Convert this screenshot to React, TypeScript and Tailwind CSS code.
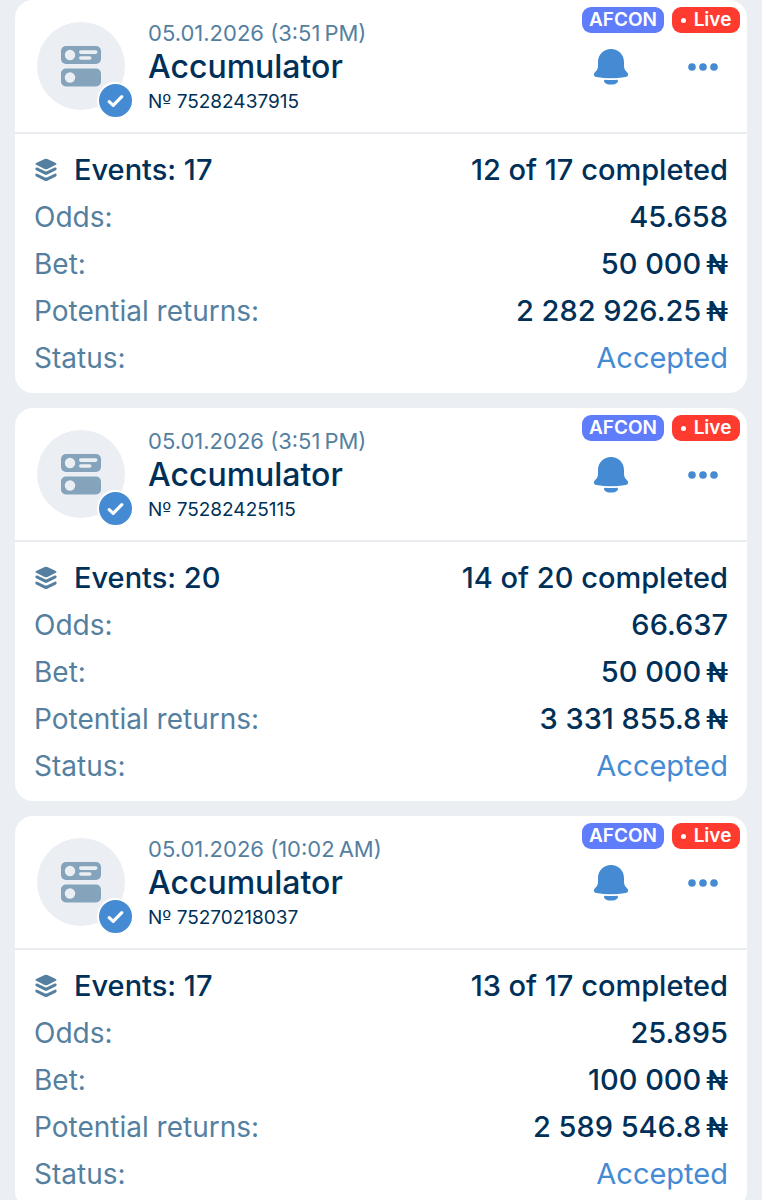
import React, { useState } from "react";

interface BetProps {
  id: string;
  date: string;
  total: number;
  completed: number;
  odds: string;
  bet: string;
  returns: string;
}

const AccumulatorIcon = () => (
  <svg width="40" height="41" viewBox="0 0 40 41" aria-hidden="true">
    <rect width="40" height="18" rx="5" fill="#85a3bb" />
    <rect y="22.5" width="40" height="18" rx="5" fill="#85a3bb" />
    <circle cx="9" cy="9" r="5.2" fill="#ebeef3" />
    <circle cx="9" cy="31.5" r="5.2" fill="#ebeef3" />
    <rect x="18" y="4.3" width="18.5" height="3.6" rx="1.8" fill="#ebeef3" />
    <rect x="18" y="10.2" width="12.5" height="3.6" rx="1.8" fill="#ebeef3" />
  </svg>
);

const CheckIcon = () => (
  <svg width="33" height="33" viewBox="0 0 33 33" fill="none" aria-hidden="true">
    <path d="M10.2 17.6 14.2 21.4 22.8 12.6" stroke="#fff" strokeWidth="3.2" strokeLinecap="round" strokeLinejoin="round" />
  </svg>
);

const LayersIcon = () => (
  <svg width="22" height="24" viewBox="0 0 22 24" fill="#557f9f" aria-hidden="true">
    <path d="M9.6 1Q11 .4 12.4 1L20.8 5Q22.2 5.9 20.8 6.8L12.4 11Q11 11.6 9.6 11L1.2 6.8Q-.2 5.9 1.2 5Z" />
    <path d="M.4 10Q1 9 2.3 9.6L9.6 13.1Q11 13.7 12.4 13.1L19.7 9.6Q21 9 21.6 10 22 11.6 20.8 12.3L12.4 16.6Q11 17.2 9.6 16.6L1.2 12.3Q0 11.6.4 10Z" />
    <path d="M.4 16.2Q1 15.2 2.3 15.8L9.6 19.3Q11 19.9 12.4 19.3L19.7 15.8Q21 15.2 21.6 16.2 22 17.8 20.8 18.5L12.4 22.8Q11 23.4 9.6 22.8L1.2 18.5Q0 17.8.4 16.2Z" />
  </svg>
);

const BellIcon = () => (
  <svg width="36" height="38" viewBox="0 0 36 38" fill="#448bd3" aria-hidden="true">
    <path d="M18 1C25.5 1 31 6.6 31 14V17.5C31 20.5 31.8 22 33.6 23.8 34.9 25.1 35.4 26.2 34.9 27.4 34.6 28.3 33.6 28.7 32.5 28.9 23 30.6 13 30.6 3.5 28.9 2.4 28.7 1.4 28.3 1.1 27.4.6 26.2 1.1 25.1 2.4 23.8 4.2 22 5 20.5 5 17.5V14C5 6.6 10.5 1 18 1Z" />
    <path d="M12 31.8Q18 32.4 24 31.8 25.4 31.9 25 33.2C24.2 35.6 22 36.6 18 36.6S11.8 35.6 11 33.2Q10.6 31.9 12 31.8Z" />
  </svg>
);

const DotsIcon = () => (
  <svg width="30" height="8" viewBox="0 0 30 8" fill="#448bd3" aria-hidden="true">
    <circle cx="4" cy="4" r="3.8" />
    <circle cx="15" cy="4" r="3.8" />
    <circle cx="26" cy="4" r="3.8" />
  </svg>
);

const Row = ({ label, children }: { label: React.ReactNode; children: React.ReactNode }) => (
  <div className="flex h-[47px] items-center justify-between">
    <dt className="text-[28px] text-[#557f9f]">{label}</dt>
    <dd className="text-[29px] font-medium text-[#003058]">{children}</dd>
  </div>
);

const Money = ({ amount }: { amount: string }) => (
  <span className="flex items-baseline gap-x-[5px]">
    {amount}
    <span className="font-['Roboto',sans-serif] text-[27px] leading-none font-medium">₦</span>
  </span>
);

const BetCard = ({ item }: { item: BetProps }) => (
  <article className="relative rounded-[18px] bg-white">
    {/* Tags */}
    <div className="absolute top-[7px] right-[7px] flex gap-2 text-[19px] leading-[26px] font-semibold text-white">
      <span className="w-[82px] rounded-[9px] bg-[#5f7cfb] text-center">AFCON</span>
      <span className="flex w-[68px] items-center justify-center gap-2 rounded-[9px] bg-[#ff3b30]">
        <span className="size-[5px] rounded-full bg-white"></span>
        Live
      </span>
    </div>
    <header className="flex justify-between border-b-2 border-[#e8ecf1] pt-5 pr-[29px] pb-4 pl-[22px]">
      <div className="flex gap-x-[23px]">
        <div className="relative mt-0.5 flex size-[88px] items-center justify-center rounded-full bg-[#ebeef3]">
          <AccumulatorIcon />
          <span className="absolute -right-[9px] -bottom-[9px] rounded-full border-2 border-white bg-[#448bd3]">
            <CheckIcon />
          </span>
        </div>
        <div>
          <p className="text-[22px] leading-[26px] text-[#557f9f]">{item.date}</p>
          <h2 className="text-[32px] leading-[42px] font-medium text-[#003058]">Accumulator</h2>
          <p className="text-[19px] leading-7 text-[#003058]">
            N<span className="font-['DejaVu_Sans',sans-serif] leading-none">º</span> {item.id}
          </p>
        </div>
      </div>
      <div className="mt-[27px] flex h-10 items-center gap-x-[59px]">
        <button type="button" aria-label="Notifications" className="cursor-pointer">
          <BellIcon />
        </button>
        <button type="button" aria-label="More" className="cursor-pointer py-3">
          <DotsIcon />
        </button>
      </div>
    </header>
    <dl className="px-[19px] py-3 leading-9">
      <Row
        label={
          <span className="flex items-center gap-x-[17px] pl-px text-[29px] font-medium text-[#003058]">
            <LayersIcon />
            Events: {item.total}
          </span>
        }
      >
        {item.completed} of {item.total} completed
      </Row>
      <Row label="Odds:">{item.odds}</Row>
      <Row label="Bet:">
        <Money amount={item.bet} />
      </Row>
      <Row label="Potential returns:">
        <Money amount={item.returns} />
      </Row>
      <Row label="Status:">
        <span className="font-normal text-[#448bd3]">Accepted</span>
      </Row>
    </dl>
  </article>
);

const App = () => {
  const [bets] = useState<BetProps[]>([
    {
      id: "75282437915",
      date: "05.01.2026 (3:51\u2009PM)",
      total: 17,
      completed: 12,
      odds: "45.658",
      bet: "50 000",
      returns: "2 282 926.25",
    },
    {
      id: "75282425115",
      date: "05.01.2026 (3:51\u2009PM)",
      total: 20,
      completed: 14,
      odds: "66.637",
      bet: "50 000",
      returns: "3 331 855.8",
    },
    {
      id: "75270218037",
      date: "05.01.2026 (10:02\u2009AM)",
      total: 17,
      completed: 13,
      odds: "25.895",
      bet: "100 000",
      returns: "2 589 546.8",
    },
  ]);

  return (
    <main className="flex min-h-screen flex-col gap-y-[15px] bg-[#ebeef3] px-[15px] font-['Inter',sans-serif]">
      {bets.map((item) => (
        <BetCard key={item.id} item={item} />
      ))}
    </main>
  );
};

export default App;
